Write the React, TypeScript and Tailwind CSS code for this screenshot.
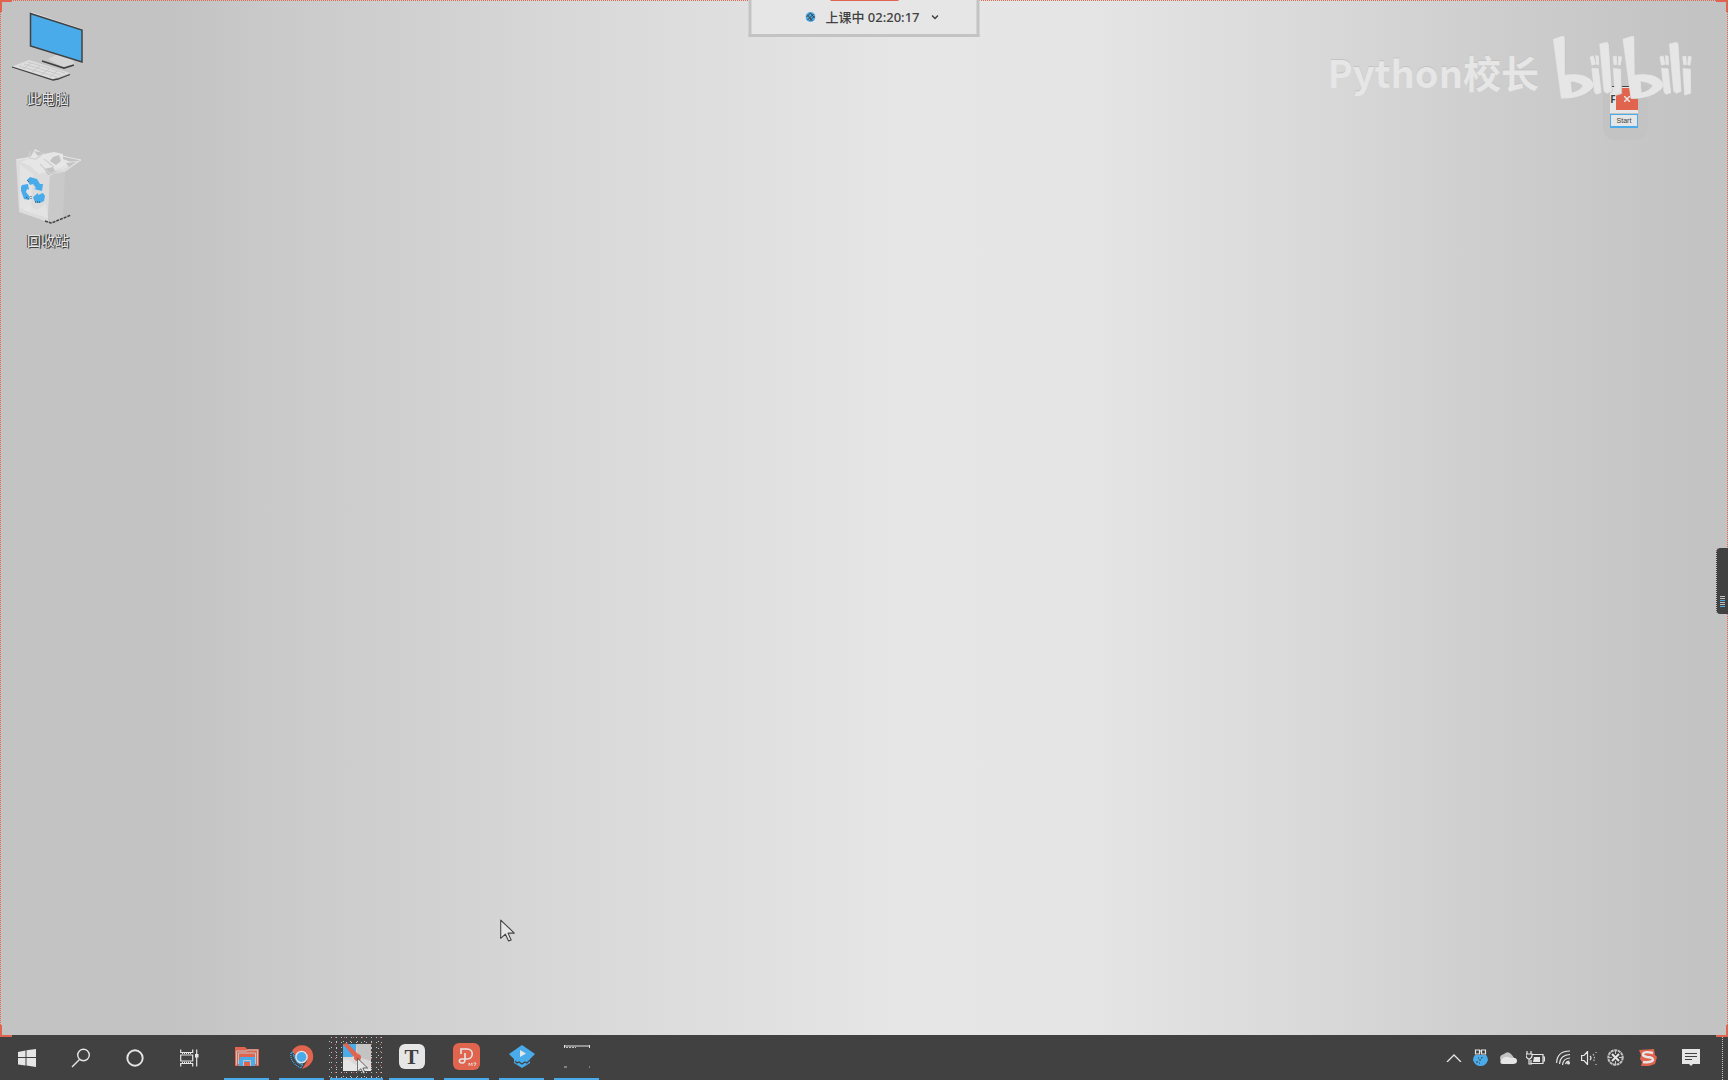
import React from 'react';

type IconProps = { className?: string };

const RED = '#e0644e';
const BLUE = '#49abea';
const LIGHT = '#e6e6e6';
const GREY = '#c3c3c3';
const DARK = '#414141';

function ComputerIcon({ className }: IconProps) {
  return (
    <svg className={className} viewBox="0 0 74 72" fill="none" aria-hidden="true">
      <path d="M20 3 71 20" stroke={LIGHT} strokeWidth="2" />
      <path d="M37 49 47 44 62 50 64 55 53 58Z" fill="#d4d4d4" />
      <path d="M19.500 3.500 71 20V52L19.500 36Z" fill={BLUE} stroke={DARK} strokeWidth="1.500" />
      <path d="M31 51 53 58 63 55" stroke={DARK} strokeWidth="1.800" />
      <path d="M1 56.500 18 50 59 63 42 69Z" fill="#dddddd" />
      <path d="M8 56 46 67M13 54 50 65M17 52 54 63M12 59 20 53M21 62 29 56M30 65 38 59M39 67 46 61" stroke={GREY} strokeWidth=".8" />
      <path d="M1 57 42 70 47 69 59 64.500" stroke={DARK} strokeWidth="1.300" />
    </svg>
  );
}

function RecycleBinIcon({ className }: IconProps) {
  return (
    <svg className={className} viewBox="0 0 72 77" fill="none" aria-hidden="true">
      <path d="M4 12 20 10 38 15 68 14 53 25 38 28 36 75 7 65Z" fill="#dcdcdc" />
      <path d="m38 28 15-3-2 45-15 5Z" fill="#c9c9c9" />
      <path d="m5 13 14-3M38 28l31-15-19-4" stroke={LIGHT} strokeWidth="1" />
      <path d="m9 15 9-4 5-9 9 5 10-2 9 2v5l10 4-12 5-12 3-10 3-9-8Z" fill={LIGHT} />
      <path d="m22 4 10 2-6 3Zm19 6 6-2 2 6-5 4-6-4Zm-9 12 9-2 3 6-8 2Zm22-6 10-1-7 5Z" fill={GREY} />
      <path d="m18 4-1 7 7 1 8-6M28 17l9 9 12-2M32 12l10 8" stroke="#d1d1d1" strokeWidth="1.200" />
      <path d="m8 18 13 9-2 38-11-4Z" fill={LIGHT} opacity=".65" />
      <path d="m17 58 8 5 9-6 2 14-26-8Z" fill={LIGHT} opacity=".65" />
      <g transform="translate(0 2)">
        <path d="m15 31 3-3 7 2 3 5 3 0-1 7-8-2 2-1-3-4-3 1Z" fill={BLUE} />
        <path d="m9 38 1-2 6-1 1 6-2-1-1 3 4 5-1 3-5-1-3-8Z" fill={BLUE} />
        <path d="m21 48 5-4v2l5-2 2 3-1 5-4 2h-4l-2-3Z" fill={BLUE} />
        <path d="m15 31 2 2m2 14v4m4 2h6M14 48l3 2" stroke={DARK} strokeDasharray="1 1" />
      </g>
      <path d="m33 74 6 2 3-1 17-7" stroke={DARK} strokeWidth="1.500" strokeDasharray="3 1" />
    </svg>
  );
}

function BilibiliLogo({ className }: IconProps) {
  return (
    <svg className={className} viewBox="0 0 426 190" aria-hidden="true">
      <defs>
        <g id="bili-half">
          <path fillRule="evenodd" d="M0 10 30 0q4 0 3 12L34 118q70-8 86 25 2 12-10 21-28 24-86 24ZM52 136 55 172Q82 166 90 150 80 139 52 136Z" />
          <path d="m140 24 22-5 4 6 9 142-14 6-8-6ZM116 97l20 2 8 72-14 5-6-7ZM111 63l10-3 6 25-11 3ZM128 59l8 2 1 26-7-1ZM181 98l22 2 1 73-18 5ZM180 62l10-1 1 25-8 1ZM197 61l9 2-4 25-7-1Z" />
        </g>
      </defs>
      <g fill="none" stroke={GREY} strokeWidth="3"><use href="#bili-half" x="2" y="1" /><use href="#bili-half" x="212" y="1" /></g>
      <g fill={LIGHT} stroke={LIGHT} strokeWidth="2"><use href="#bili-half" /><use href="#bili-half" x="210" /></g>
    </svg>
  );
}

function Pointer({ className }: IconProps) {
  return (
    <svg className={className} viewBox="0 0 14 22" aria-hidden="true">
      <path d="M.5 1v17.500l4.500-4 3 6.500 2.500-1-3-6.500h6Z" fill={LIGHT} stroke={DARK} strokeWidth="1" strokeLinejoin="round" />
    </svg>
  );
}

const windowsIcon = (
  <svg className="h-[18px] w-[18px]" viewBox="0 0 18 18" fill={LIGHT} aria-hidden="true">
    <path d="M0 3 7.500 1.500V8H0ZM8.500 1.300 18 0v8H8.500ZM0 9h7.500v7.500L0 15.500ZM8.500 9H18v9l-9.500-1.400Z" />
  </svg>
);

const searchIcon = (
  <svg className="h-5 w-5" viewBox="0 0 20 20" fill="none" stroke={LIGHT} strokeWidth="1.400" aria-hidden="true">
    <circle cx="12.500" cy="7" r="5.800" /><path d="m8.500 11.500-7.500 7.500" />
  </svg>
);

const cortanaIcon = (
  <svg className="h-[18px] w-[18px]" viewBox="0 0 18 18" fill="none" stroke={LIGHT} strokeWidth="1.900" aria-hidden="true"><circle cx="9" cy="9" r="7.700" /></svg>
);

const taskViewIcon = (
  <svg className="h-[18px] w-[19px]" viewBox="0 0 19 18" fill="none" stroke={LIGHT} strokeWidth="1.200" aria-hidden="true">
    <path d="M.7.500v3h12v-3M.7 6h12v6H.7ZM.7 17.500v-3h12v3M16.700.500v17" /><path d="M15 5h3.500v3.500H15Z" fill={LIGHT} stroke="none" />
    <path d="M2 4.500h10M2 13.300h10" strokeDasharray="1 1" />
  </svg>
);

const explorerIcon = (
  <svg className="h-5 w-6" viewBox="0 0 24 20" aria-hidden="true">
    <path d="M0 0h10l2 2h12v17H0Z" fill={RED} />
    <path d="M1.500 18V4H11l2-1h9.500v15M3.500 17V6h17v11" fill="none" stroke={GREY} strokeWidth="1" />
    <path d="M5 10h15v9h-4v-4H8v4H4v-6h1Z" fill={BLUE} /><path d="M9 15h6v4H9Z" fill={RED} />
    <path d="M8.500 19v-5.500h7V19" fill="none" stroke={GREY} />
  </svg>
);

const chromeIcon = (
  <svg className="h-6 w-6" viewBox="0 0 24 24" aria-hidden="true">
    <circle cx="12" cy="12" r="11.500" fill={DARK} />
    <path d="M2 6a11.500 11.500 0 0 1 20 0q4 10-5 16l-5 2 5-8V8H8l-1 4Z" fill={RED} />
    <path d="M1 8q-1 10 10 15l2-4Q5 19 3 7Z" fill="none" stroke={BLUE} strokeWidth="1.300" strokeDasharray="1 1" />
    <path d="m4 10 4 8 4 2" fill="none" stroke={BLUE} strokeWidth="1.500" strokeDasharray="1 1" />
    <circle cx="11.500" cy="12" r="5.600" fill={BLUE} stroke={LIGHT} strokeWidth="1.400" />
  </svg>
);

const snipIcon = (
  <svg className="h-7 w-7" viewBox="0 0 28 28" aria-hidden="true">
    <path d="M0 1h28v27H0Z" fill="#d8d8d8" /><path d="M13 1h15v17l-13-4Z" fill={GREY} />
    <path d="M0 1h13v10l-4 3H0Z" fill={BLUE} /><path d="m0 1 4-1 11 11-4 3Z" fill={RED} />
    <circle cx="14.500" cy="14.500" r="3.500" fill={RED} />
    <path d="M0 18c8-5 8 5 15 4s4 6 13 4v2H0Z" fill={LIGHT} />
  </svg>
);

const typoraIcon = (
  <span className="flex h-[25px] w-[26px] items-center justify-center rounded-md bg-[#e6e6e6] font-['Liberation_Serif',serif] text-[21px] leading-6 font-bold text-[#414141]">T</span>
);

const pdfIcon = (
  <span className="relative flex h-[27px] w-[27px] rounded-md bg-[#e0644e]">
    <svg className="h-[27px] w-[27px]" viewBox="0 0 27 27" fill="none" aria-hidden="true">
      <path d="M8 11V6h6c7 0 7 10 0 10H9c-4 0-3 4 0 4 3 0 3-2 3-5v-5" stroke={LIGHT} strokeWidth="1.600" />
      <path d="M16 23v-3l1.500 1.500L19 20v3m1.500-3H23l-1.500 3" stroke={LIGHT} strokeWidth=".9" />
    </svg>
  </span>
);

const playIcon = (
  <svg className="h-[23px] w-[26px]" viewBox="0 0 26 23" aria-hidden="true">
    <path d="M13 0 26 9l-5 5v4l-8 5-8-5v-4L0 9Z" fill={BLUE} />
    <path d="M11 5v7l6-3.500Z" fill={LIGHT} />
    <path d="m6 16 2 2 2-1 3 2 3-2 2 1 3-3" fill="none" stroke={DARK} strokeWidth="1.100" />
  </svg>
);

const blankWindowIcon = (
  <svg className="h-[23px] w-[26px]" viewBox="0 0 26 23" fill="none" aria-hidden="true">
    <path d="M0 1h26M.5 0v3M25.500 0v3" stroke={LIGHT} strokeWidth="1" /><path d="M2 2.500h10" stroke={GREY} strokeDasharray="2 1" />
    <path d="M0 22h3M25 22h1" stroke={GREY} />
  </svg>
);

const systemButtons = [
  { label: '开始', icon: windowsIcon },
  { label: '搜索', icon: searchIcon },
  { label: 'Cortana', icon: cortanaIcon },
  { label: '任务视图', icon: taskViewIcon },
];

const apps = [
  { label: '文件资源管理器', icon: explorerIcon },
  { label: 'Google Chrome', icon: chromeIcon },
  { label: '截图工具', icon: snipIcon, active: true },
  { label: 'Typora', icon: typoraIcon },
  { label: 'PDF', icon: pdfIcon },
  { label: '腾讯课堂', icon: playIcon },
  { label: '窗口', icon: blankWindowIcon },
];

const tray = [
  { label: '显示隐藏的图标', width: 'w-[27px]', icon: (
    <svg className="h-2 w-4 shrink-0" viewBox="0 0 16 8" fill="none" stroke={LIGHT} strokeWidth="1.300" aria-hidden="true"><path d="m1 8 7-7 7 7" /></svg>
  ) },
  { label: '助手', width: 'w-[27px]', icon: (
    <svg className="h-[17px] w-[15px] shrink-0" viewBox="0 0 15 17" aria-hidden="true">
      <path d="M2 6h11q2 2 2 5-2 6-7.500 6T0 11q0-3 2-5Z" fill={BLUE} />
      <path d="M2.500 1h4v4h-4ZM8.500 1h4v4h-4ZM6 2h3" fill="none" stroke={LIGHT} strokeWidth="1.200" />
      <path d="M5 9h1m2 0h1M6 11h2m-2 3h1M4 12v2m5-6v1" stroke={DARK} />
    </svg>
  ) },
  { label: 'OneDrive', width: 'w-[28px]', icon: (
    <svg className="h-3 w-[18px] shrink-0" viewBox="0 0 18 12" aria-hidden="true">
      <path d="M1 6q0-3 4-4 4-4 8 1l2 3-13 4Z" fill={GREY} /><path d="M2 8q3-4 7-3l3 1q6-1 6 3 0 3-4 3H4q-4 0-2-4Z" fill={LIGHT} />
    </svg>
  ) },
  { label: '电池', width: 'w-[27px]', icon: (
    <svg className="h-[14px] w-[19px] shrink-0" viewBox="0 0 19 14" fill="none" stroke={LIGHT} strokeWidth="1.200" aria-hidden="true">
      <path d="M6 3.500h11v9H5V9M17 6h1.500v4H17M1 0v3m4-3v3M0 3h6v2q-1 3-3 3t-3-3ZM3 8v5h3" /><path d="M8 6h6v5H7Z" fill={LIGHT} stroke="none" />
    </svg>
  ) },
  { label: '网络', width: 'w-[29px]', icon: (
    <svg className="h-[15px] w-[15px] shrink-0" viewBox="0 0 15 15" fill="none" stroke={LIGHT} strokeWidth="1.200" aria-hidden="true">
      <path d="M.6 13Q1 1 14 1M3.500 14Q4 5 14 4.500M6.500 15Q7 8.500 14 8M9.500 14q1-3 4-3" /><circle cx="12.500" cy="13" r="1.500" fill={LIGHT} stroke="none" />
    </svg>
  ) },
  { label: '音量', width: 'w-[21px]', icon: (
    <svg className="h-[14px] w-4 shrink-0" viewBox="0 0 16 14" fill="none" stroke={LIGHT} strokeWidth="1.200" aria-hidden="true">
      <path d="M.6 4.500H3l3.500-4v13L3 9.500H.6ZM9 5q2 2 0 4" /><path d="M12 3q3 4 0 8" stroke={GREY} strokeDasharray="1.500 1.500" /><path d="M15 1v1m0 11v1" stroke={GREY} />
    </svg>
  ) },
  { label: '同步', width: 'w-[32px]', icon: (
    <svg className="h-[17px] w-[17px] shrink-0" viewBox="0 0 17 17" fill="none" aria-hidden="true">
      <circle cx="8.500" cy="8.500" r="7.200" stroke={GREY} strokeWidth="2" strokeDasharray="3 .6" />
      <circle cx="8.500" cy="8.500" r="4.800" stroke={DARK} strokeWidth="2" />
      <path d="m5 5 7 7m0-7-7 7" stroke={LIGHT} strokeWidth="2" /><path d="M8.500 1v4m0 7v4M1 8.500h4m7 0h4" stroke={GREY} />
    </svg>
  ) },
  { label: '搜狗输入法', width: 'w-[34px]', icon: (
    <svg className="h-[17px] w-[18px] shrink-0" viewBox="0 0 18 17" aria-hidden="true">
      <path d="m0 1 15-1 1 6 2 2-2 7-6 2H2l1-4-2-3 1-4Z" fill={RED} />
      <path d="M14 4Q5 2 4 5q-1 2 4 3 6 0 6 3-2 3-10 2" fill="none" stroke={LIGHT} strokeWidth="2.400" />
    </svg>
  ) },
  { label: '通知', width: 'w-[52px]', icon: (
    <svg className="h-[17px] w-[18px] shrink-0" viewBox="0 0 18 17" aria-hidden="true">
      <path d="M0 0h18v15h-7l-2 2-2-2H0Z" fill={LIGHT} /><path d="M3 4.500h12M3 7.500h12M3 10.500h7" stroke={DARK} strokeWidth="1.200" />
    </svg>
  ) },
];

function DesktopShortcut({ label, children }: { label: string; children: React.ReactNode }) {
  return (
    <button type="button" className="flex w-24 flex-col items-center gap-[7px]">
      {children}
      <span className="text-[14px] leading-5 text-[#e6e6e6] [text-shadow:1px_1px_0_#414141,-1px_0_0_#414141,1px_0_0_#414141]">{label}</span>
    </button>
  );
}

function ClassStatus() {
  return (
    <button type="button" className="absolute top-0 left-1/2 flex h-[37px] w-[231px] -translate-x-1/2 items-start justify-center border-x-[3px] border-b-[3px] border-[#c3c3c3] bg-[#e6e6e6] pl-4">
      <span className="absolute top-0 left-1/2 h-px w-[68px] -translate-x-1/2 bg-[#e0644e]" />
      <span className="mt-[7px] flex items-center text-[13px] leading-5 text-[#414141]">
        <svg className="mr-[10px] h-[10px] w-[10px]" viewBox="0 0 10 10" aria-hidden="true">
          <circle cx="5" cy="5" r="5" fill={BLUE} /><path d="m1 5 4-4m-3 7 6-6M4 9l5-5M2 3l5 6M5 1l4 5" stroke={DARK} strokeWidth="1" />
        </svg>
        <span className="font-medium">上课中 02:20:17</span>
        <svg className="ml-3 h-[5px] w-[7px]" viewBox="0 0 7 5" fill="none" stroke={DARK} strokeWidth="1.500" aria-hidden="true"><path d="m.5.500 3 3 3-3" /></svg>
      </span>
    </button>
  );
}

function StartWidget() {
  return (
    <div className="absolute top-[86px] right-20 flex h-[54px] w-[45px] flex-col rounded-b-xl bg-[#c3c3c3] pl-[7px]">
      <div className="flex h-[27px] w-7 border-t border-[#414141] bg-[#e6e6e6]">
        <span className="w-[6px] pt-[4px] text-center text-[10px] leading-4 font-bold text-[#414141]">F</span>
        <button type="button" aria-label="关闭" className="mt-px flex h-[22px] w-[22px] items-center justify-center bg-[#e0644e]">
          <svg className="h-[6px] w-[6px]" viewBox="0 0 6 6" stroke={LIGHT} strokeWidth="1.500" aria-hidden="true"><path d="m0 0 6 6m0-6L0 6" /></svg>
        </button>
      </div>
      <button type="button" className="mt-px flex h-[14px] w-7 items-center justify-center border border-b-2 border-[#49abea] bg-[#e6e6e6] font-['Liberation_Sans',sans-serif] text-[7px] leading-none text-[#414141]">Start</button>
    </div>
  );
}

function Taskbar() {
  return (
    <footer className="flex h-[45px] shrink-0 items-stretch justify-between bg-[#414141]">
      <div className="flex">
        <div className="flex pr-[3px]">
          {systemButtons.map((item) => (
            <button key={item.label} type="button" aria-label={item.label} className="flex w-[54px] items-center justify-center">{item.icon}</button>
          ))}
        </div>
        {apps.map((app) => (
          <button
            key={app.label}
            type="button"
            aria-label={app.label}
            className={app.active
              ? 'relative flex w-[55px] flex-col items-center bg-[radial-gradient(#c3c3c3_0.6px,transparent_1px),radial-gradient(#c3c3c3_0.6px,transparent_1px),radial-gradient(#e0644e_0.6px,transparent_1px)] bg-[length:5px_5px,7px_7px,9px_7px] bg-[position:0_0,4px_3px,2px_6px]'
              : 'relative flex w-[55px] flex-col items-center'}
          >
            <span className="flex flex-1 items-center">{app.icon}</span>
            <span className={app.active ? 'h-[2px] w-[53px] bg-[#49abea]' : 'h-[2px] w-[45px] bg-[#49abea]'} />
            {app.active && <Pointer className="absolute top-[22px] left-[28px] h-[18px] w-[11px]" />}
          </button>
        ))}
      </div>
      <div className="flex items-stretch">
        {tray.map((item) => (
          <button key={item.label} type="button" aria-label={item.label} className={`flex items-center justify-center ${item.width}`}>{item.icon}</button>
        ))}
        <button type="button" aria-label="显示桌面" className="ml-[5px] w-[6px] border-l border-dotted border-[#c3c3c3]" />
      </div>
    </footer>
  );
}

export default function App() {
  return (
    <div className="flex min-h-screen flex-col font-['Noto_Sans','Noto_Sans_CJK_SC',sans-serif]">
      <main className="relative flex-1 bg-[linear-gradient(90deg,#c3c3c3_0%,#c3c3c3_10%,#cacaca_16%,#d1d1d1_25%,#dadada_35%,#e0e0e0_44%,#e6e6e6_52%,#e5e5e5_63%,#dfdfdf_69%,#d8d8d8_77%,#cecece_86%,#c3c3c3_98%)]">
        <div className="flex flex-col items-start gap-[38px] pt-[10px]">
          <DesktopShortcut label="此电脑"><ComputerIcon className="h-[72px] w-[74px]" /></DesktopShortcut>
          <DesktopShortcut label="回收站"><RecycleBinIcon className="h-[77px] w-[72px]" /></DesktopShortcut>
        </div>

        <div className="pointer-events-none absolute inset-0 border border-b-0 border-dotted border-[#e0644e]" />
        <span className="absolute top-0 left-0 h-3 w-3 border-t-2 border-l-2 border-[#e0644e]" />
        <span className="absolute top-0 right-0 h-3 w-3 border-t-2 border-r-2 border-[#e0644e]" />
        <span className="absolute -bottom-[2px] left-0 h-3 w-3 border-b-2 border-l-2 border-[#e0644e]" />
        <span className="absolute right-0 -bottom-[2px] h-3 w-3 border-r-2 border-b-2 border-[#e0644e]" />

        <ClassStatus />
        <StartWidget />

        <div className="pointer-events-none absolute top-9 right-[33px] flex items-start gap-[14px]">
          <span className="pt-[10px] font-['Noto_Sans_CJK_SC',sans-serif] text-[38px] leading-[52px] font-bold whitespace-nowrap text-[#e6e6e6] [text-shadow:0_-1px_0_#c3c3c3]">Python校长</span>
          <BilibiliLogo className="h-[63px] w-[142px]" />
        </div>

        <button type="button" aria-label="展开侧边栏" className="absolute top-[548px] right-0 flex h-[66px] w-3 flex-col items-center justify-end gap-px rounded-l-sm border-l border-dotted border-[#c3c3c3] bg-[#414141] pb-[7px]">
          <span className="h-px w-[5px] bg-[#c3c3c3]" />
          <span className="h-px w-[5px] bg-[#c3c3c3]" />
          <span className="h-px w-[5px] bg-[#49abea]" />
          <span className="h-px w-[5px] bg-[#c3c3c3]" />
          <span className="h-px w-[5px] bg-[#c3c3c3]" />
          <span className="h-px w-[5px] bg-[#49abea]" />
        </button>

        <Pointer className="absolute top-[919px] left-[500px] h-[23px] w-[15px]" />
      </main>
      <Taskbar />
    </div>
  );
}
